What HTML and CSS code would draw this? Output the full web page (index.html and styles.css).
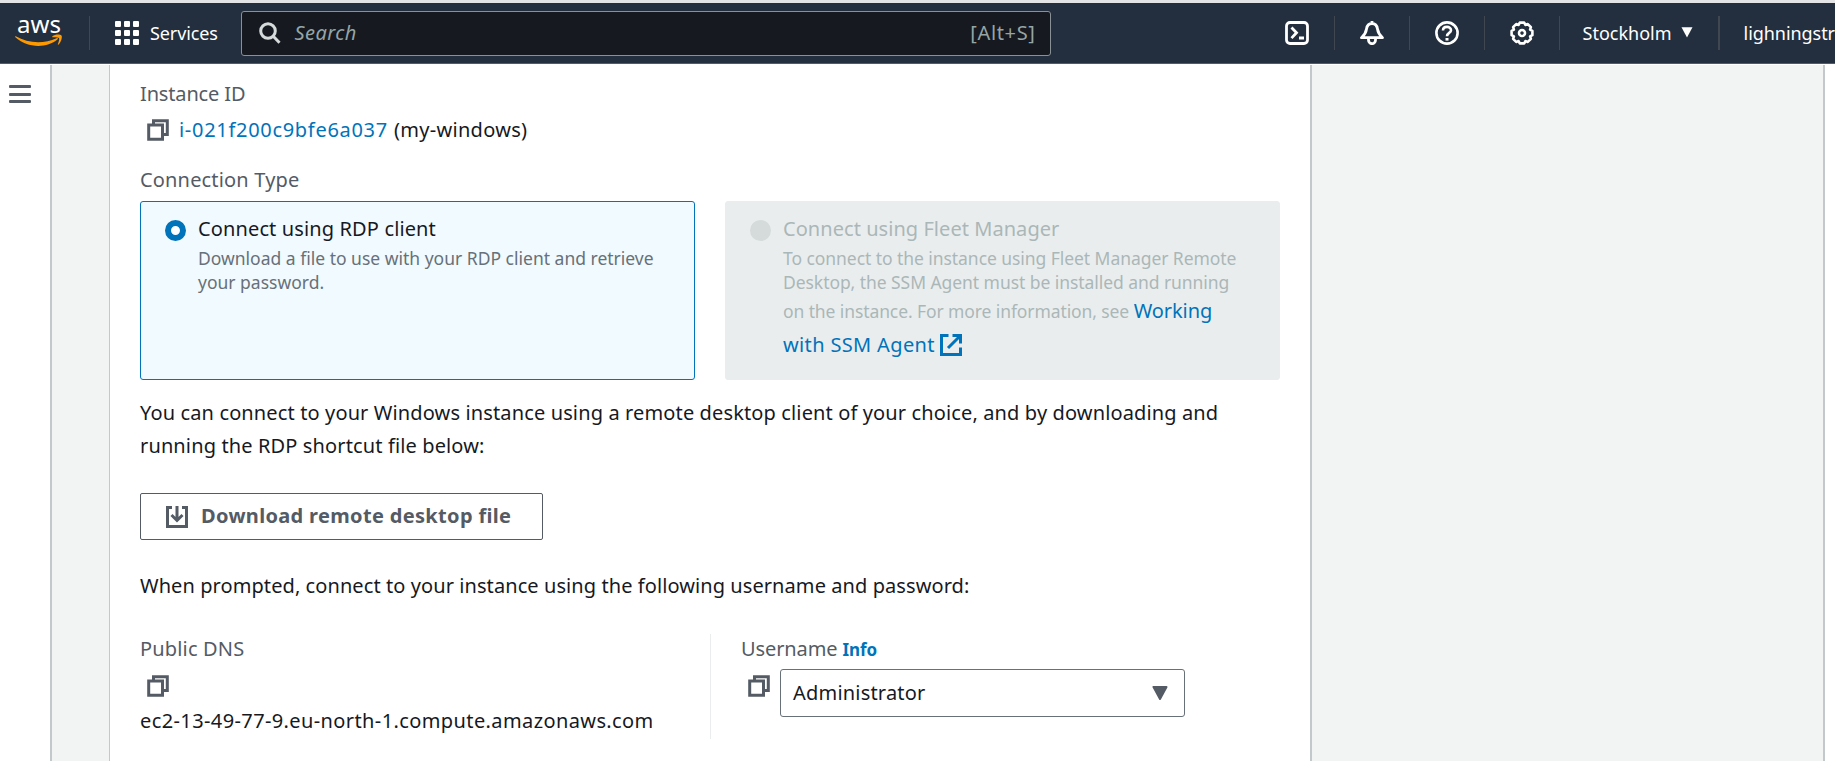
FILE: index.html
```html
<!DOCTYPE html>
<html lang="en">
<head>
<meta charset="utf-8">
<title>Connect to instance</title>
<link rel="stylesheet" href="styles.css">
</head>
<body>
<svg class="defs" width="0" height="0" aria-hidden="true">
  <symbol id="copy" viewBox="0 0 22 22">
    <path d="M6.500 5.500V1.700h13.800v13.800H17M1.700 6h13.800v14.300H1.700z" fill="none" stroke="currentColor" stroke-width="3"/>
  </symbol>
</svg>
<header class="topbar">
  <svg class="logo" viewBox="0 0 48 32" role="img" aria-label="aws">
    <text class="logo-text" x="2" y="16" textLength="44" lengthAdjust="spacingAndGlyphs">aws</text>
    <path d="M.8 19.200C13 26.500 29 27 41.500 21.200c1.400-.6 2 .4.900 1.300C32 31.500 12 31.200.400 20.300c-.6-.6-.2-1.400.400-1.100z" fill="#f90"/>
    <path d="M37.500 19.200c2.500-2 7.500-2 9-.7 1 1.200-.2 6.500-2.900 9-.6.5-1 .2-.7-.4.900-2.100 1.700-5.100 1.100-6-.7-.9-4-.9-6-.8-.8.100-1-.6-.5-1.100z" fill="#f90"/>
  </svg>
  <span class="bar bar-logo"></span>
  <svg class="grid-icon" viewBox="0 0 24 24" fill="#fff">
    <rect width="6" height="6" rx="1"/><rect x="9" width="6" height="6" rx="1"/><rect x="18" width="6" height="6" rx="1"/>
    <rect y="9" width="6" height="6" rx="1"/><rect x="9" y="9" width="6" height="6" rx="1"/><rect x="18" y="9" width="6" height="6" rx="1"/>
    <rect y="18" width="6" height="6" rx="1"/><rect x="9" y="18" width="6" height="6" rx="1"/><rect x="18" y="18" width="6" height="6" rx="1"/>
  </svg>
  <span class="services">Services</span>
  <div class="search">
    <svg class="magnifier" viewBox="0 0 22 22" fill="none" stroke="#d5dbdb" stroke-width="3"><circle cx="9" cy="9" r="7.300"/><path d="M14 14l6.500 6.800"/></svg>
    <span class="search-hint">Search</span>
    <span class="shortcut">[Alt+S]</span>
  </div>
  <nav class="tools">
    <svg class="tool" viewBox="0 0 24 24" fill="none" stroke="#fff" stroke-width="2.800"><rect x="1.500" y="1.500" width="21" height="21" rx="3.500"/><path d="M6.500 6.500l5 5.300-5 5.300M14 17h5"/></svg>
    <span class="bar"></span>
    <svg class="tool" viewBox="0 0 24 24" fill="none" stroke="#fff" stroke-width="2.800" stroke-linejoin="round"><path d="M12 2.500c-3.500 0-5 2-5.500 5.500C6 12 5 13.500 1.500 16.700h21C19 13.500 18 12 17.500 8 17 4.500 15.500 2.500 12 2.500zM8.500 17v2a3.500 3.700 0 0 0 7 0v-2M12 0v2"/></svg>
    <span class="bar"></span>
    <svg class="tool" viewBox="0 0 24 24" fill="none" stroke="#fff" stroke-width="2.600"><circle cx="12" cy="12" r="10.600"/><path d="M8 9.500c0-4.800 8-4.800 8-.3 0 2.800-4 2.500-4 6"/><path d="M12 17v2.600" stroke-width="3"/></svg>
    <span class="bar"></span>
    <svg class="tool" viewBox="-12 -12 24 24" fill="none" stroke="#fff" stroke-width="2.600" stroke-linejoin="round"><path d="M-2.200-10.400H2.200L3.400-8.100 5.800-8.900 8.900-5.800 8.100-3.400 10.400-2.200V2.200L8.100 3.400 8.900 5.800 5.800 8.900 3.400 8.100 2.200 10.400H-2.200L-3.400 8.100-5.800 8.900-8.900 5.800-8.100 3.400-10.400 2.200V-2.200L-8.100-3.400-8.900-5.800-5.800-8.900-3.400-8.100z"/><circle r="3"/></svg>
    <span class="bar"></span>
    <span class="region"><span>Stockholm</span><svg class="caret" viewBox="0 0 12 11"><path d="M.5.300h11L6 10.500z" fill="#fff"/></svg></span>
    <span class="bar bar-wide"></span>
    <span class="account">lighningstr</span>
  </nav>
</header>
<div class="page">
  <aside class="rail"><span class="burger"><i></i><i></i><i></i></span></aside>
  <main class="panel">
    <div class="label instance-label">Instance ID</div>
    <div class="id-row">
      <svg class="copy"><use href="#copy"/></svg>
      <a class="link id">i-021f200c9bfe6a037</a>
      <span class="instance-name">(my-windows)</span>
    </div>
    <div class="label type-label">Connection Type</div>
    <div class="tiles">
      <section class="tile selected">
        <span class="radio on"></span>
        <div>
          <div class="tile-title">Connect using RDP client</div>
          <p class="tile-text">Download a file to use with your RDP client and retrieve<br>your password.</p>
        </div>
      </section>
      <section class="tile disabled">
        <span class="radio"></span>
        <div>
          <div class="tile-title">Connect using Fleet Manager</div>
          <p class="tile-text">To connect to the instance using Fleet Manager Remote<br>Desktop, the SSM Agent must be installed and running<br><span class="tail"><span class="more">on the instance. For more information, see</span> <a class="link">Working</a><br><a class="link agent">with SSM Agent <svg class="external" viewBox="0 0 22 22" fill="none" stroke="currentColor" stroke-width="3"><path d="M8.500 1.500h-7v19h19v-7M12.500 1.500h8v8M20 2L8 14"/></svg></a></span></p>
        </div>
      </section>
    </div>
    <p class="body intro">You can connect to your Windows instance using a remote desktop client of your choice, and by downloading and<br>running the RDP shortcut file below:</p>
    <button class="download">
      <svg class="dl-icon" viewBox="0 0 22 22" fill="none" stroke="currentColor" stroke-width="3"><path d="M6 1.500H1.500v19h19v-19H16M11 0v14M5.500 9l5.500 5.500L16.500 9"/></svg>
      <span>Download remote desktop file</span>
    </button>
    <p class="body prompt">When prompted, connect to your instance using the following username and password:</p>
    <div class="creds">
      <div class="dns">
        <div class="label">Public DNS</div>
        <svg class="copy"><use href="#copy"/></svg>
        <div class="dns-name">ec2-13-49-77-9.eu-north-1.compute.amazonaws.com</div>
      </div>
      <div class="user">
        <div class="label user-label">Username <a class="info">Info</a></div>
        <div class="user-row">
          <svg class="copy"><use href="#copy"/></svg>
          <div class="select"><span>Administrator</span><svg class="select-caret" viewBox="0 0 16 14"><path d="M1.500 1h13L8 13z" fill="#545b64" stroke="#545b64" stroke-width="2" stroke-linejoin="round"/></svg></div>
        </div>
      </div>
    </div>
  </main>
  <aside class="edge"></aside>
</div>
</body>
</html>
```
FILE: styles.css
```css
* { box-sizing: border-box; }
html { overflow: hidden; }
body { margin: 0; width: 1835px; height: 761px; overflow: hidden; background: #fff; color: #16191f; font: 20px/28px "Noto Sans", sans-serif; }
p { margin: 0; }
svg { display: block; flex: none; }
.defs { position: absolute; }
.topbar { display: flex; align-items: center; height: 64px; border-top: 3px solid #e3e4e6; border-bottom: 1px solid #545b64; padding-left: 15px; background: #232f3e; color: #fff; white-space: nowrap; overflow: hidden; font-size: 18px; }
.logo { width: 48px; height: 32px; overflow: visible; }
.logo-text { font: 24px "Noto Sans", sans-serif; fill: #fff; }
.bar { flex: none; width: 1px; height: 34px; background: #414750; }
.bar-logo { margin: 0 25px 0 26px; }
.grid-icon { width: 24px; height: 24px; }
.services { width: 103px; padding: 0 0 1px 11px; letter-spacing: -.1px; }
.search { flex: none; display: flex; align-items: center; width: 810px; height: 45px; margin-left: 2px; padding: 0 14px 0 17px; border: 1px solid #879196; border-radius: 3px; background: #16191f; font-size: 20px; }
.magnifier { width: 22px; height: 22px; margin-right: 14px; }
.search-hint { color: #95a5a6; font-style: italic; letter-spacing: .45px; }
.shortcut { margin-left: auto; color: #95a5a6; letter-spacing: .65px; }
.tools { display: flex; align-items: center; margin-left: 234px; gap: 25px; }
.tool { width: 24px; height: 24px; }
.region { display: flex; align-items: center; gap: 9px; margin-left: -2px; padding-bottom: 1px; }
.account { margin-left: -1px; padding-bottom: 1px; letter-spacing: -.05px; }
.caret { width: 12px; height: 11px; }
.bar-wide { width: 2px; }
.page { display: flex; justify-content: space-between; height: 696px; margin-top: 1px; background: #f2f3f3; }
.rail, .panel, .edge { background: #fff; }
.rail { width: 52px; border-right: 2px solid #c3c9ca; padding: 20px 0 0 9px; }
.burger { display: grid; gap: 4.500px; width: 22px; }
.burger i { height: 3px; border-radius: 1px; background: #545b64; }
.panel { width: 1203px; margin: 0 auto 0 57px; border: solid #c3c9ca; border-width: 0 2px 0 1px; padding: 15px 30px 0; letter-spacing: .13px; }
.label { color: #545b64; letter-spacing: .17px; }
.instance-label { letter-spacing: -.15px; }
.id-row { display: flex; align-items: center; margin-top: 8px; white-space: nowrap; }
.copy { width: 22px; height: 22px; margin-left: 7px; color: #545b64; }
.link { color: #0073bb; font-size: 20px; }
.id { margin: 0 6px 0 10px; letter-spacing: .7px; }
.instance-name { letter-spacing: .3px; }
.type-label { margin-top: 22px; }
.tiles { display: grid; grid-template-columns: 555px 555px; gap: 30px; margin-top: 7px; }
.tile { display: flex; gap: 12px; height: 179px; padding: 13px 0 0 24px; border: 1px solid #0073bb; border-radius: 3px; background: #f1faff; white-space: nowrap; }
.tile.disabled { border-color: #eaeded; background: #eaeded; }
.radio { flex: none; width: 21px; height: 21px; margin-top: 5px; border-radius: 50%; background: #d5dbdb; }
.radio.on { border: 6px solid #0073bb; background: #fff; }
.tile-text { margin-top: 3px; color: #687078; font-size: 17.500px; line-height: 24px; letter-spacing: 0; }
.disabled .tile-title, .disabled .tile-text { color: #aab7b8; }
.disabled .tile-title { letter-spacing: .05px; }
.disabled .tile-text { letter-spacing: -.06px; }
.tail { line-height: 33px; }
.more { letter-spacing: -.1px; }
.agent { letter-spacing: .35px; }
.external { display: inline-block; width: 22px; height: 22px; vertical-align: -4px; }
.body { line-height: 33px; white-space: nowrap; }
.intro { margin-top: 16px; }
.download { display: flex; align-items: center; width: 403px; height: 47px; margin-top: 31px; padding: 0 25px; border: 1px solid #545b64; border-radius: 2px; background: #fff; color: #545b64; font: bold 20px/28px "Noto Sans", sans-serif; letter-spacing: .33px; white-space: nowrap; }
.download span { padding-bottom: 2px; }
.dl-icon { width: 22px; height: 22px; margin-right: 13px; }
.prompt { margin-top: 29px; letter-spacing: .08px; }
.creds { display: grid; grid-template-columns: 570px 1fr; height: 105px; margin-top: 32px; padding-top: 1px; }
.dns .copy { margin-top: 12px; }
.dns-name { margin-top: 10px; letter-spacing: .39px; }
.user { height: 105px; margin-top: -1px; padding: 1px 0 0 30px; border-left: 1px solid #eaeded; }
.user-label { height: 28px; letter-spacing: -.1px; }
.user-row { display: flex; margin-top: 6px; }
.user-row .copy { margin: 6px 10px 0 7px; }
.select { display: flex; align-items: center; justify-content: space-between; width: 405px; height: 48px; padding: 0 16px 1px 12px; border: 1px solid #687078; border-radius: 3px; letter-spacing: .2px; }
.select-caret { width: 16px; height: 14px; }
.info { color: #0073bb; font-size: 17px; font-weight: bold; }
.edge { width: 12px; border-left: 2px solid #c3c9ca; }
```
